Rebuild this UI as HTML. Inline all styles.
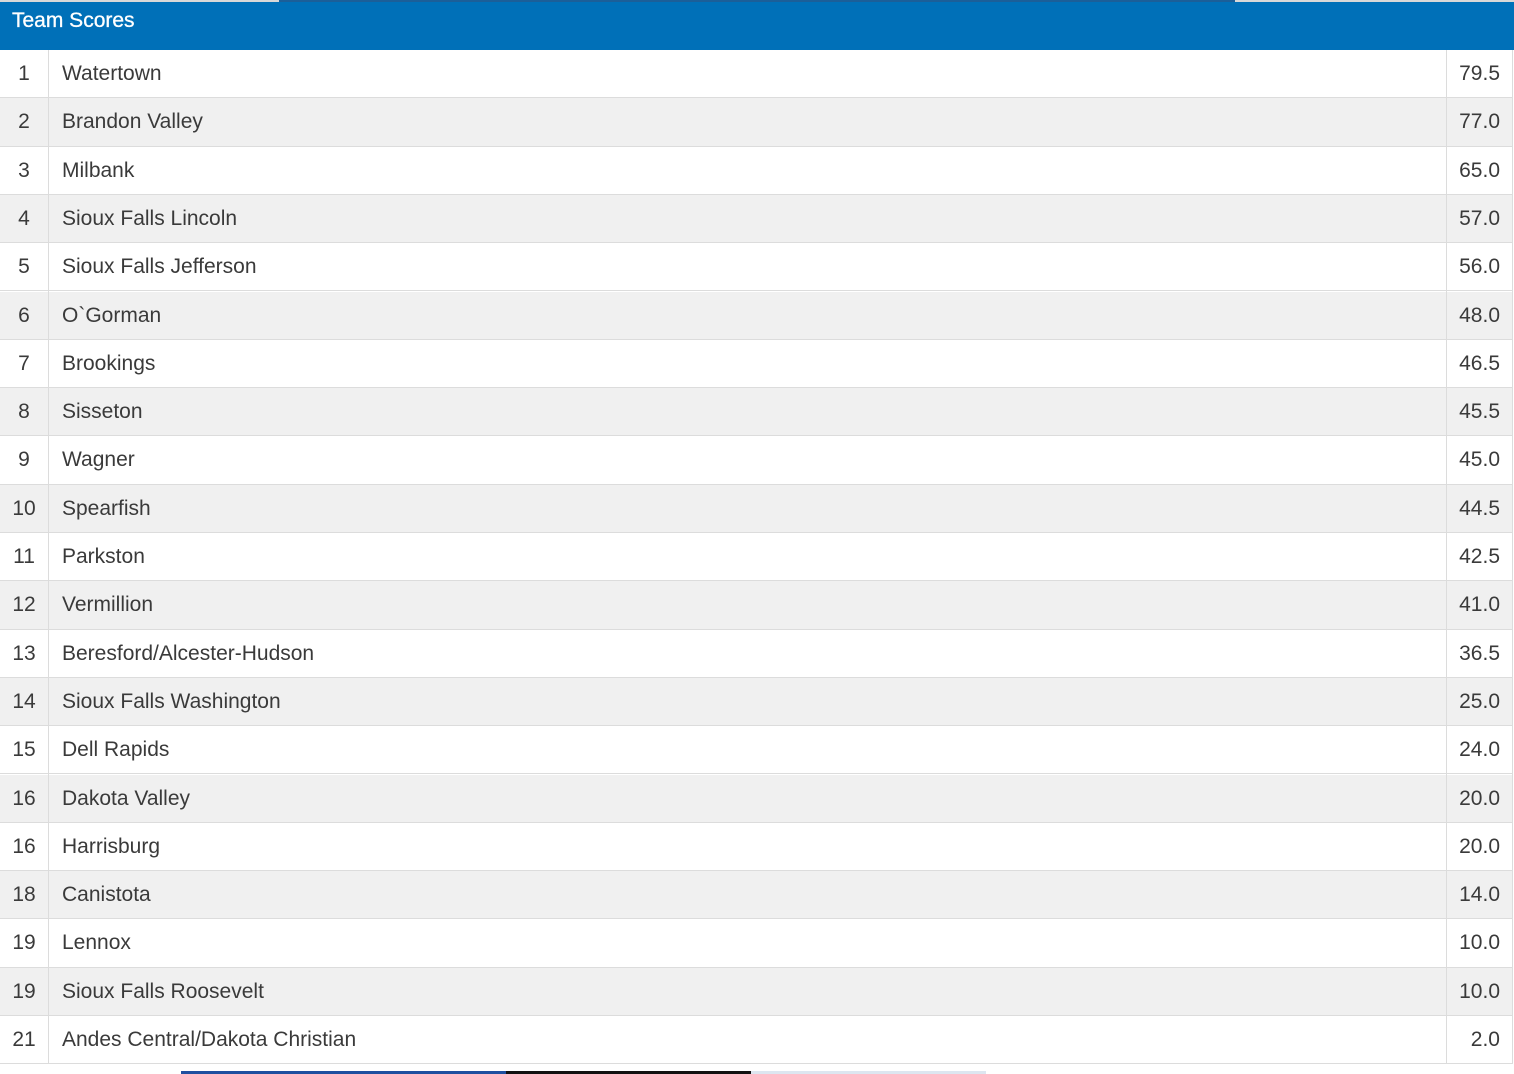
<!DOCTYPE html>
<html><head><meta charset="utf-8"><style>
*{margin:0;padding:0;box-sizing:border-box}
body{width:1514px;height:1074px;background:#fff;position:relative;overflow:hidden;font-family:"Liberation Sans",Arial,sans-serif;color:#3a3a3a}
.top{position:absolute;left:0;top:0;width:1514px;height:2px;background:#d8d8d8}
.top2{position:absolute;left:279px;top:0;width:956px;height:2px;background:#1b5f99}
.hd{position:absolute;left:0;top:2px;width:1514px;height:48px;background:#0070b8;color:#fff;font-size:21px;padding:7px 0 0 12px;-webkit-text-stroke:0.3px #fff}
.r{position:absolute;left:0;width:1513px;height:48.3px;border-bottom:1px solid #dcdcdc;font-size:21px}
.r.g{background:#f0f0f0}
.r span{position:absolute;top:12px}
.n{left:0;width:48px;text-align:center}
.t{left:62px}
.s{right:13px}
.v1{position:absolute;left:48px;top:50px;width:1px;height:1014px;background:#dcdcdc}
.v2{position:absolute;left:1446px;top:50px;width:1px;height:1014px;background:#dcdcdc}
.v3{position:absolute;left:1512px;top:50px;width:1px;height:1014px;background:#dcdcdc}
.bot{position:absolute;left:181px;top:1071px;width:325px;height:3px;background:#1f4fa0}
.bot2{position:absolute;left:506px;top:1071px;width:245px;height:3px;background:#111}
.bot3{position:absolute;left:751px;top:1071px;width:235px;height:3px;background:#dde6f0}
</style></head><body>
<div class="top"></div><div class="top2"></div>
<div class="hd">Team Scores</div>
<div class="r" style="top:50px"><span class="n">1</span><span class="t">Watertown</span><span class="s">79.5</span></div>
<div class="r g" style="top:98.3px"><span class="n">2</span><span class="t">Brandon Valley</span><span class="s">77.0</span></div>
<div class="r" style="top:146.6px"><span class="n">3</span><span class="t">Milbank</span><span class="s">65.0</span></div>
<div class="r g" style="top:194.9px"><span class="n">4</span><span class="t">Sioux Falls Lincoln</span><span class="s">57.0</span></div>
<div class="r" style="top:243.2px"><span class="n">5</span><span class="t">Sioux Falls Jefferson</span><span class="s">56.0</span></div>
<div class="r g" style="top:291.5px"><span class="n">6</span><span class="t">O`Gorman</span><span class="s">48.0</span></div>
<div class="r" style="top:339.8px"><span class="n">7</span><span class="t">Brookings</span><span class="s">46.5</span></div>
<div class="r g" style="top:388.1px"><span class="n">8</span><span class="t">Sisseton</span><span class="s">45.5</span></div>
<div class="r" style="top:436.4px"><span class="n">9</span><span class="t">Wagner</span><span class="s">45.0</span></div>
<div class="r g" style="top:484.7px"><span class="n">10</span><span class="t">Spearfish</span><span class="s">44.5</span></div>
<div class="r" style="top:533px"><span class="n">11</span><span class="t">Parkston</span><span class="s">42.5</span></div>
<div class="r g" style="top:581.3px"><span class="n">12</span><span class="t">Vermillion</span><span class="s">41.0</span></div>
<div class="r" style="top:629.6px"><span class="n">13</span><span class="t">Beresford/Alcester-Hudson</span><span class="s">36.5</span></div>
<div class="r g" style="top:677.9px"><span class="n">14</span><span class="t">Sioux Falls Washington</span><span class="s">25.0</span></div>
<div class="r" style="top:726.2px"><span class="n">15</span><span class="t">Dell Rapids</span><span class="s">24.0</span></div>
<div class="r g" style="top:774.5px"><span class="n">16</span><span class="t">Dakota Valley</span><span class="s">20.0</span></div>
<div class="r" style="top:822.8px"><span class="n">16</span><span class="t">Harrisburg</span><span class="s">20.0</span></div>
<div class="r g" style="top:871.1px"><span class="n">18</span><span class="t">Canistota</span><span class="s">14.0</span></div>
<div class="r" style="top:919.4px"><span class="n">19</span><span class="t">Lennox</span><span class="s">10.0</span></div>
<div class="r g" style="top:967.7px"><span class="n">19</span><span class="t">Sioux Falls Roosevelt</span><span class="s">10.0</span></div>
<div class="r" style="top:1016px"><span class="n">21</span><span class="t">Andes Central/Dakota Christian</span><span class="s">2.0</span></div>
<div class="v1"></div><div class="v2"></div><div class="v3"></div>
<div class="bot"></div><div class="bot2"></div><div class="bot3"></div>
</body></html>
